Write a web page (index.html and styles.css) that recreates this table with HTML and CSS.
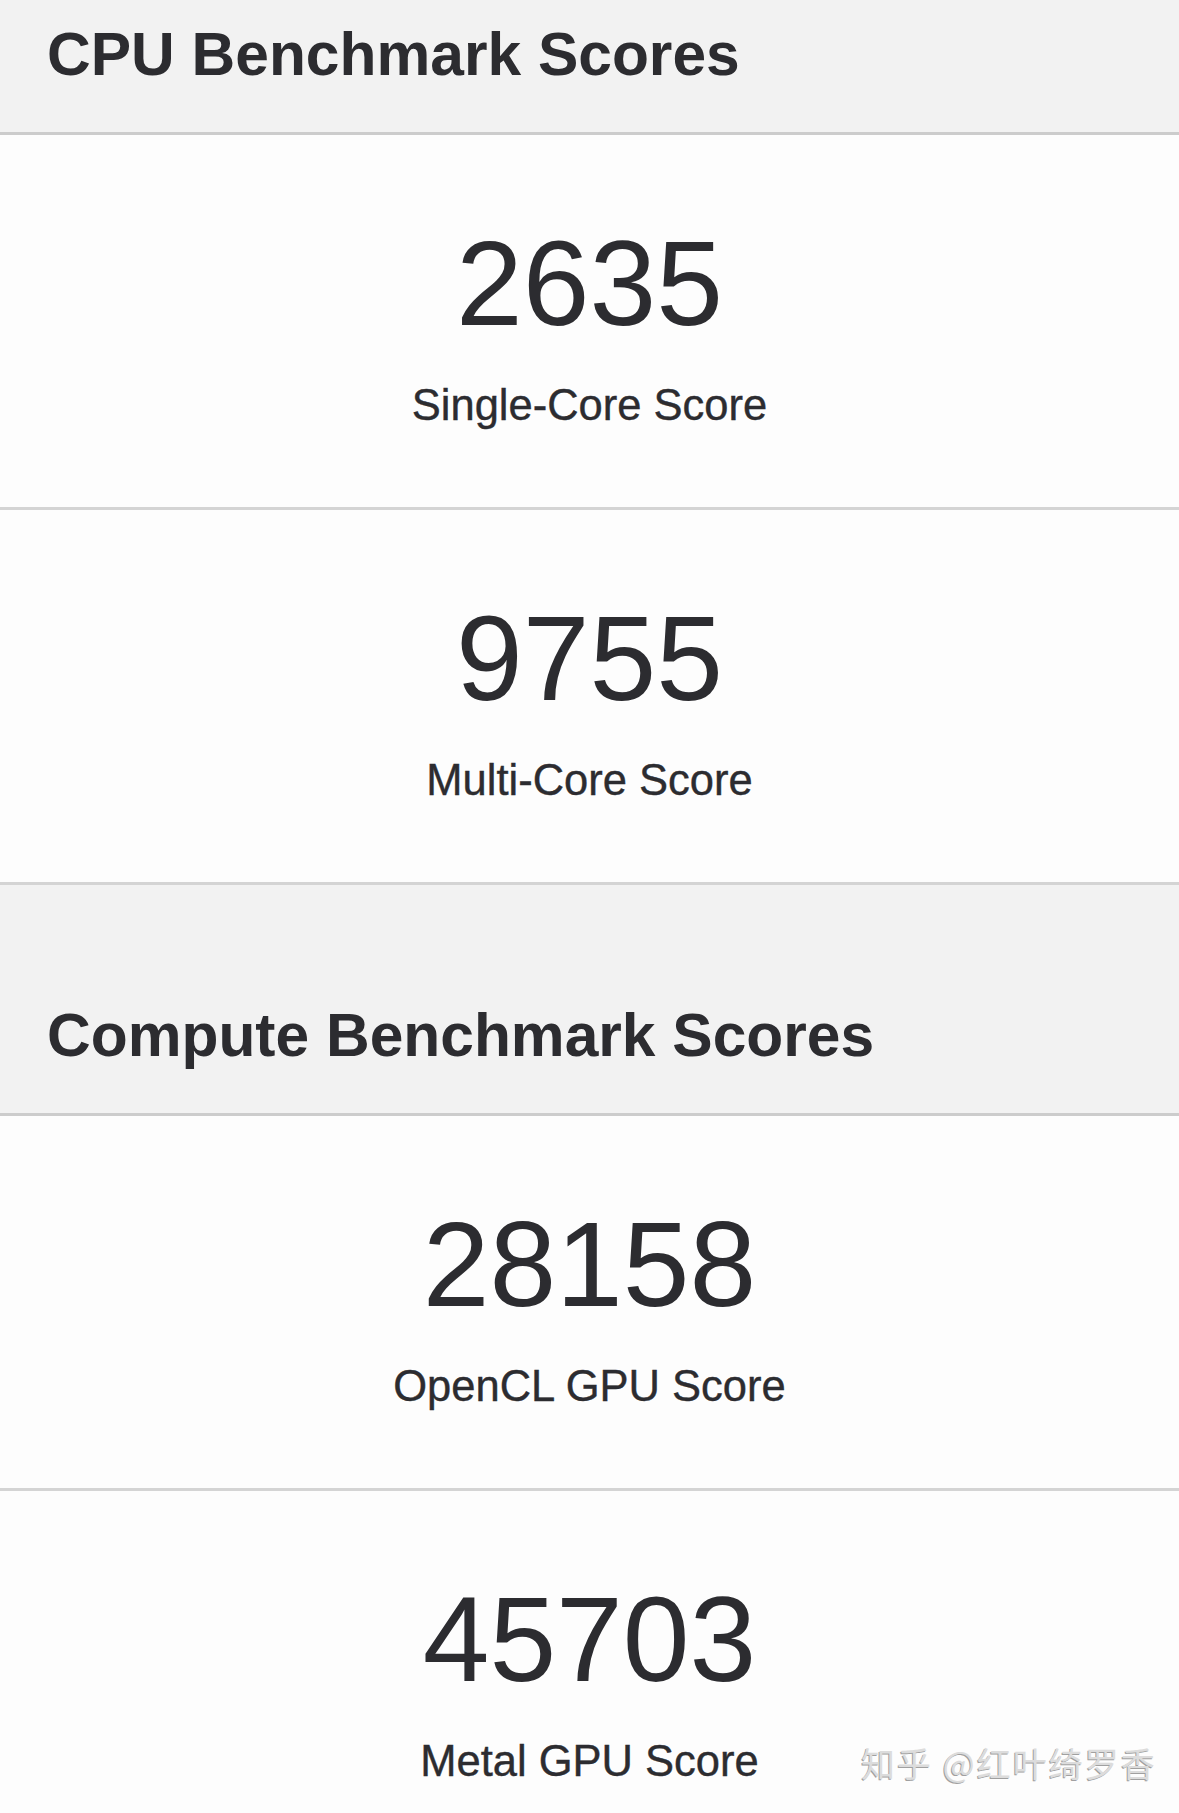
FILE: index.html
```html
<!DOCTYPE html>
<html lang="en">
<head>
<meta charset="utf-8">
<title>Benchmark Scores</title>
<link rel="stylesheet" href="styles.css">
</head>
<body>
<div class="page">
  <div class="section-head first"><h2 class="section-title">CPU Benchmark Scores</h2></div>
  <div class="score-card">
    <div class="score-value">2635</div>
    <div class="score-label">Single-Core Score</div>
  </div>
  <div class="score-card">
    <div class="score-value">9755</div>
    <div class="score-label">Multi-Core Score</div>
  </div>
  <div class="section-head second"><h2 class="section-title">Compute Benchmark Scores</h2></div>
  <div class="score-card">
    <div class="score-value">28158</div>
    <div class="score-label">OpenCL GPU Score</div>
  </div>
  <div class="score-card">
    <div class="score-value">45703</div>
    <div class="score-label">Metal GPU Score</div>
  </div>
  <div class="watermark">知乎 @红叶绮罗香</div>
</div>
</body>
</html>
```
FILE: styles.css
```css
html, body {
  margin: 0;
  padding: 0;
  background: #fdfdfd;
}
.page {
  position: relative;
  width: 1179px;
  height: 1813px;
  overflow: hidden;
  font-family: "Liberation Sans", Arial, sans-serif;
  color: #2c2c30;
  background: #fdfdfd;
}
.section-head {
  background: #f2f2f2;
  border-bottom: 3px solid #cccccc;
  padding: 0 0 48px 47px;
}
.section-head.first {
  padding-top: 24px;
}
.section-head.second {
  padding-top: 120px;
}
.section-title {
  margin: 0;
  font-size: 60.5px;
  line-height: 60px;
  font-weight: 700;
  color: #2c2c30;
}
.score-card {
  display: flex;
  flex-direction: column;
  align-items: center;
  padding: 88px 0 80px;
  border-bottom: 3px solid #d4d4d4;
}
.score-value {
  font-size: 120px;
  line-height: 120px;
  font-weight: 400;
  color: #2c2c30;
}
.score-label {
  margin-top: 40px;
  font-size: 43.5px;
  line-height: 44px;
  color: #2c2c30;
  -webkit-text-stroke: 0.4px #2c2c30;
}
.watermark {
  position: absolute;
  left: 861px;
  top: 1745px;
  font-family: "Noto Sans CJK SC", sans-serif;
  font-size: 34px;
  line-height: 36px;
  color: #dcdcdc;
  text-shadow: -1px 1px 0 #a0a0a0;
  letter-spacing: 2px;
}
```
